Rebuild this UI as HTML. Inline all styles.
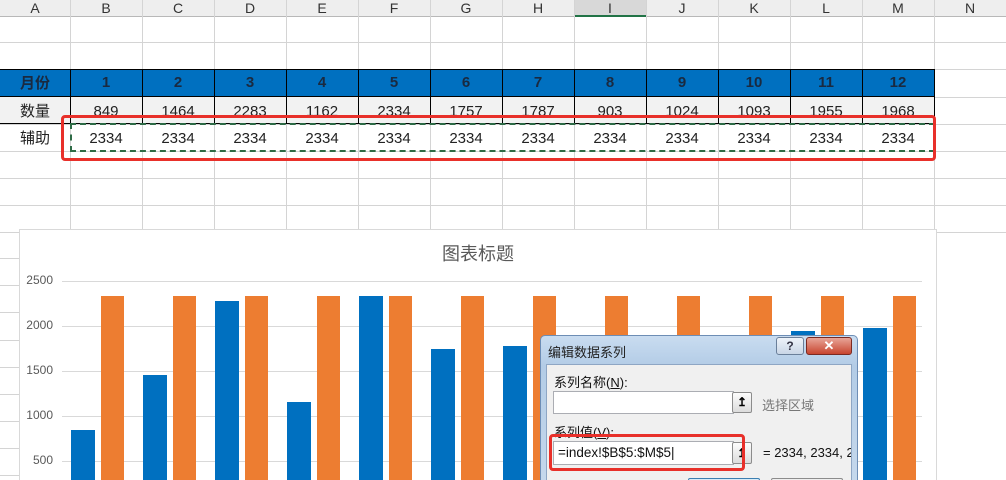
<!DOCTYPE html>
<html><head><meta charset="utf-8"><style>
*{margin:0;padding:0;box-sizing:border-box}
html,body{width:1006px;height:480px;overflow:hidden}
body{background:#fff;position:relative;font-family:"Liberation Sans","Noto Sans CJK SC",sans-serif}
.a{position:absolute}
.vl{position:absolute;width:1px;background:#d4d4d4}
.hl{position:absolute;height:1px;background:#d4d4d4}
.ch{position:absolute;top:0;height:16px;font-size:14px;color:#333;text-align:center;line-height:16px}
.c{position:absolute;text-align:center;font-size:14px;color:#222}
</style></head><body>
<div class="a" style="left:0;top:0;width:1006px;height:17px;background:#eeeeee;border-bottom:1px solid #b8b8b8"></div>
<div class="a" style="left:574px;top:0;width:72px;height:17px;background:#d8d8d8;border-bottom:2px solid #217346"></div>
<div id="cols"></div>
<script>
var L="ABCDEFGHIJKLMN".split(""),h="";
for(var i=0;i<14;i++){var x=i==0?0:70+72*(i-1);var w=i==0?70:72;
h+='<div class="ch" style="left:'+x+'px;width:'+w+'px">'+L[i]+'</div>';
if(i>0)h+='<div class="vl" style="left:'+x+'px;top:0;height:232px"></div>';}
[42,69,97,124,151,178,205,232].forEach(function(y){h+='<div class="hl" style="left:0;top:'+y+'px;width:1006px"></div>'});
[258,285,312,340,367,394,421,448,475].forEach(function(y){h+='<div class="hl" style="left:0;top:'+y+'px;width:20px"></div>'});
h+='<div class="a" style="left:0;top:69px;width:935px;height:28px;background:#0070c0"></div>';
h+='<div class="a" style="left:0;top:97px;width:935px;height:27px;background:#f2f2f2"></div>';
h+='<div class="a" style="left:0;top:69px;width:935px;height:1px;background:#000"></div>';
h+='<div class="a" style="left:0;top:96px;width:935px;height:1px;background:#000"></div>';
h+='<div class="a" style="left:0;top:123px;width:935px;height:1px;background:#000"></div>';
var q=[849,1464,2283,1162,2334,1757,1787,903,1024,1093,1955,1968];
h+='<div class="c" style="left:0;top:72px;width:70px;font-weight:bold;color:#1a2a40;font-size:15px">月份</div>';
h+='<div class="c" style="left:0;top:100px;width:70px;font-size:15px">数量</div>';
h+='<div class="c" style="left:0;top:127px;width:70px;font-size:15px">辅助</div>';
for(var j=0;j<12;j++){var x=70+72*j;
h+='<div class="a" style="left:'+x+'px;top:69px;width:1px;height:55px;background:#000"></div>';
h+='<div class="c" style="left:'+x+'px;top:74px;width:72px;font-weight:bold;color:#1a2a40;font-size:15px">'+(j+1)+'</div>';
h+='<div class="c" style="left:'+x+'px;top:103px;width:72px;font-size:15px">'+q[j]+'</div>';
h+='<div class="c" style="left:'+x+'px;top:130px;width:72px;font-size:15px">2334</div>';}
h+='<div class="a" style="left:934px;top:69px;width:1px;height:55px;background:#000"></div>';
h+='<div class="a" style="left:70px;top:123px;width:865px;height:29px;border:2px dashed #2e6b46"></div>';
h+='<div class="a" style="left:61px;top:115px;width:875px;height:46px;border:3px solid #e8302a;border-radius:4px"></div>';
h+='<div class="a" style="left:19px;top:229px;width:918px;height:260px;background:#fff;border:1px solid #d9d9d9"></div>';
h+='<div class="a" style="left:19px;top:240px;width:918px;text-align:center;font-size:18px;color:#595959">图表标题</div>';
[[2500,281],[2000,326],[1500,371],[1000,416],[500,461]].forEach(function(g){
h+='<div class="a" style="left:62px;top:'+g[1]+'px;width:860px;height:1px;background:#d9d9d9"></div>';
h+='<div class="a" style="left:20px;top:'+(g[1]-8)+'px;width:33px;text-align:right;font-size:12px;color:#595959">'+g[0]+'</div>';});
var t=[430,375,301,402,296,349,346,420,410,404,331,328];
for(var j=0;j<12;j++){var x=71+72*j;
h+='<div class="a" style="left:'+x+'px;top:'+t[j]+'px;width:24px;height:'+(480-t[j])+'px;background:#0070c0"></div>';
h+='<div class="a" style="left:'+(x+30)+'px;top:296px;width:23px;height:184px;background:#ed7d31"></div>';}
document.getElementById('cols').innerHTML=h;
</script>
<div class="a" style="left:540px;top:335px;width:318px;height:145px;border:1px solid #6d8db5;border-bottom:none;border-radius:5px 5px 0 0;background:linear-gradient(#c9dcf0,#b3cce6 30px,#c5d8ec)"></div>
<div class="a" style="left:548px;top:342px;font-size:13px;color:#222">编辑数据系列</div>
<div class="a" style="left:776px;top:337px;width:28px;height:18px;border:1px solid #6a7f9a;border-radius:3px;background:linear-gradient(#eef3f9,#c9d6e6);font-size:12px;text-align:center;line-height:16px;font-weight:bold;color:#334">?</div>
<div class="a" style="left:806px;top:337px;width:46px;height:18px;border:1px solid #7a2a22;border-radius:3px;background:linear-gradient(#e8a598,#c8452f);font-size:13px;text-align:center;line-height:16px;font-weight:bold;color:#fff">✕</div>
<div class="a" style="left:546px;top:364px;width:306px;height:116px;background:#f0f0f0;border:1px solid #8ea6c4;border-bottom:none"></div>
<div class="a" style="left:554px;top:372px;font-size:13px;color:#111">系列名称(<u>N</u>):</div>
<div class="a" style="left:553px;top:391px;width:181px;height:23px;background:#fff;border:1px solid #abadb3"></div>
<div class="a" style="left:732px;top:392px;width:20px;height:21px;background:linear-gradient(#fdfdfd,#dcdcdc);border:1px solid #8c8c8c;border-radius:2px;font-size:12px;text-align:center;line-height:19px;font-weight:bold">↥</div>
<div class="a" style="left:762px;top:395px;font-size:13px;color:#777">选择区域</div>
<div class="a" style="left:554px;top:422px;font-size:13px;color:#111">系列值(<u>V</u>):</div>
<div class="a" style="left:553px;top:441px;width:181px;height:24px;background:#fff;border:1px solid #abadb3"></div>
<div class="a" style="left:558px;top:445px;font-size:13.5px;color:#111">=index!$B$5:$M$5|</div>
<div class="a" style="left:732px;top:442px;width:20px;height:22px;background:linear-gradient(#fdfdfd,#dcdcdc);border:1px solid #8c8c8c;border-radius:2px;font-size:12px;text-align:center;line-height:20px;font-weight:bold">↥</div>
<div class="a" style="left:549px;top:434px;width:196px;height:37px;border:3px solid #e8302a;border-radius:4px"></div>
<div class="a" style="left:763px;top:445px;width:88px;overflow:hidden;white-space:nowrap;font-size:13px;color:#111">= 2334, 2334, 2334</div>
<div class="a" style="left:688px;top:478px;width:72px;height:2px;border:1px solid #3c7fb1;border-bottom:none;border-radius:3px 3px 0 0;background:#d8ecf8"></div>
<div class="a" style="left:771px;top:478px;width:72px;height:2px;border:1px solid #8c8c8c;border-bottom:none;border-radius:3px 3px 0 0;background:#eee"></div>
</body></html>
